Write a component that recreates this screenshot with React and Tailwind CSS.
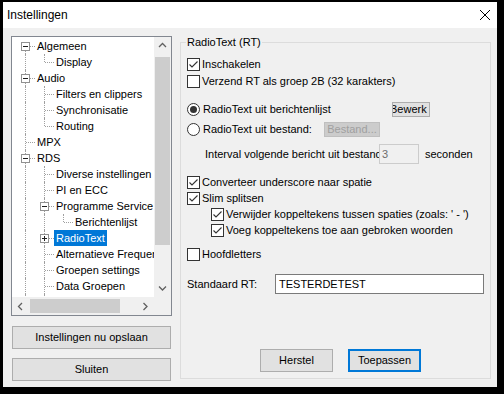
import React from "react";

const FONT = { fontFamily: '"Liberation Sans", Arial, sans-serif' };

const treeRows = [
  { label: "Algemeen", level: 0, exp: "-", own: "bottom", guides: [] },
  { label: "Display", level: 1, own: "top", guides: [true] },
  { label: "Audio", level: 0, exp: "-", own: "full", guides: [] },
  { label: "Filters en clippers", level: 1, own: "full", guides: [true] },
  { label: "Synchronisatie", level: 1, own: "full", guides: [true] },
  { label: "Routing", level: 1, own: "top", guides: [true] },
  { label: "MPX", level: 0, own: "full", guides: [] },
  { label: "RDS", level: 0, exp: "-", own: "full", guides: [] },
  { label: "Diverse instellingen", level: 1, own: "full", guides: [true] },
  { label: "PI en ECC", level: 1, own: "full", guides: [true] },
  { label: "Programme Service", level: 1, exp: "-", own: "full", guides: [true] },
  { label: "Berichtenlijst", level: 2, own: "top", guides: [true, true] },
  { label: "RadioText", level: 1, exp: "+", own: "full", guides: [true], selected: true },
  { label: "Alternatieve Frequenties", level: 1, own: "full", guides: [true] },
  { label: "Groepen settings", level: 1, own: "full", guides: [true] },
  { label: "Data Groepen", level: 1, own: "full", guides: [true] },
  { label: "Afzendinstellingen", level: 1, own: "full", guides: [true] },
  { label: "Overige", level: 1, own: "top", guides: [true] },
];

function TreeRow({ row }) {
  return (
    <div className="flex h-[16px] whitespace-nowrap">
      {row.guides.map((g, i) => (
        <div key={i} className="relative w-[19px] h-full shrink-0">
          {g && <div className="absolute left-[13px] top-0 h-full border-l border-dotted border-[#a0a0a0]" />}
        </div>
      ))}
      <div className="relative w-[23px] h-full shrink-0">
        {row.own === "full" && <div className="absolute left-[13px] top-0 h-full border-l border-dotted border-[#a0a0a0]" />}
        {row.own === "top" && <div className="absolute left-[13px] top-0 h-[8px] border-l border-dotted border-[#a0a0a0]" />}
        {row.own === "bottom" && <div className="absolute left-[13px] top-[8px] h-[8px] border-l border-dotted border-[#a0a0a0]" />}
        <div className="absolute left-[14px] top-[8px] w-[9px] border-t border-dotted border-[#a0a0a0]" />
        {row.exp && (
          <div className="absolute left-[9px] top-[4px] w-[9px] h-[9px] border border-[#919191] bg-white">
            <div className="absolute left-[1px] top-[3px] w-[5px] h-[1px] bg-[#1e1e1e]" />
            {row.exp === "+" && <div className="absolute left-[3px] top-[1px] w-[1px] h-[5px] bg-[#1e1e1e]" />}
          </div>
        )}
      </div>
      <span
        className={
          "px-[2px] leading-[16px] " +
          (row.selected ? "bg-[#0078d7] text-white" : "text-black")
        }
      >
        {row.label}
      </span>
    </div>
  );
}

function Chevron({ dir }) {
  const d = {
    up: "M1 5 L4.5 1.5 L8 5",
    down: "M1 1.5 L4.5 5 L8 1.5",
    left: "M5 1 L1.5 4.5 L5 8",
    right: "M1.5 1 L5 4.5 L1.5 8",
  }[dir];
  const vertical = dir === "up" || dir === "down";
  return (
    <svg width={vertical ? 9 : 7} height={vertical ? 7 : 9} viewBox={vertical ? "0 0 9 7" : "0 0 7 9"}>
      <path d={d} fill="none" stroke="#606060" strokeWidth="1.3" />
    </svg>
  );
}

function Checkbox({ checked }) {
  return (
    <div className="w-[13px] h-[13px] border border-[#333333] bg-white shrink-0 flex items-center justify-center">
      {checked && (
        <svg width="11" height="11" viewBox="0 0 11 11">
          <path d="M1.5 5.5 L4 8 L9.5 2.5" fill="none" stroke="#333333" strokeWidth="1.1" />
        </svg>
      )}
    </div>
  );
}

function Radio({ checked }) {
  return (
    <div className="w-[13px] h-[13px] rounded-full border border-[#333333] bg-white shrink-0 flex items-center justify-center">
      {checked && <div className="w-[7px] h-[7px] rounded-full bg-[#333333]" />}
    </div>
  );
}

function CheckRow({ checked, label, className = "" }) {
  return (
    <div className={"flex items-center h-[16px] " + className}>
      <Checkbox checked={checked} />
      <span className="ml-[2px] whitespace-nowrap">{label}</span>
    </div>
  );
}

export default function App() {
  return (
    <div className="w-[504px] h-[394px] bg-black pt-[2px] pl-[3px] text-[11px] text-black" style={FONT}>
      <div className="w-[494px] h-[385px] bg-[#f0f0f0] flex flex-col">
        <div className="h-[26px] bg-white flex items-center justify-between pl-[4px] pr-[7px] shrink-0">
          <span className="text-[12px]">Instellingen</span>
          <svg width="10" height="10" viewBox="0 0 10 10">
            <path d="M0 0 L10 10 M10 0 L0 10" stroke="#000" strokeWidth="1" />
          </svg>
        </div>

        <div className="flex">
          {/* left column */}
          <div className="pl-[8px] pt-[8px] flex flex-col">
            <div className="w-[161px] h-[280px] border border-[#828790] bg-white flex flex-col">
              <div className="flex h-[260px]">
                <div className="w-[142px] h-full overflow-hidden pt-[1px]">
                  {treeRows.map((r) => (
                    <TreeRow key={r.label} row={r} />
                  ))}
                </div>
                <div className="w-[17px] h-full bg-[#f0f0f0] flex flex-col">
                  <div className="h-[17px] flex items-center justify-center">
                    <Chevron dir="up" />
                  </div>
                  <div className="mt-[3px] mx-[1px] h-[188px] bg-[#cdcdcd]" />
                  <div className="flex-1" />
                  <div className="h-[17px] flex items-center justify-center">
                    <Chevron dir="down" />
                  </div>
                </div>
              </div>
              <div className="flex h-[18px] bg-[#f0f0f0]">
                <div className="w-[142px] h-full flex items-center">
                  <div className="w-[17px] h-full flex items-center justify-center">
                    <Chevron dir="left" />
                  </div>
                  <div className="ml-[1px] w-[90px] h-[14px] bg-[#cdcdcd]" />
                  <div className="flex-1" />
                  <div className="w-[17px] h-full flex items-center justify-center">
                    <Chevron dir="right" />
                  </div>
                </div>
                <div className="w-[17px] h-full bg-[#f0f0f0]" />
              </div>
            </div>
            <button className="mt-[10px] ml-[1px] w-[159px] h-[23px] bg-[#e1e1e1] border border-[#adadad] text-[11px]">
              Instellingen nu opslaan
            </button>
            <button className="mt-[9px] ml-[1px] w-[159px] h-[23px] bg-[#e1e1e1] border border-[#adadad] text-[11px]">
              Sluiten
            </button>
          </div>

          {/* right column */}
          <div className="relative ml-[8px] mt-[14px] w-[311px] h-[337px] border border-[#dcdcdc] flex flex-col pl-[6px] pt-[13px] pb-[6px]">
            <span className="absolute left-[5px] top-[-8px] px-[1px] bg-[#f0f0f0] leading-[14px]">RadioText (RT)</span>

            <CheckRow checked label="Inschakelen" />
            <CheckRow checked={false} label="Verzend RT als groep 2B (32 karakters)" className="mt-[1px]" />

            <div className="flex items-center h-[16px] mt-[12px]">
              <div className="flex items-center w-[205px]">
                <Radio checked />
                <span className="ml-[3px] whitespace-nowrap">RadioText uit berichtenlijst</span>
              </div>
              <button className="w-[38px] h-[15px] bg-[#e1e1e1] border border-[#adadad] flex items-center justify-start overflow-hidden text-[11px] leading-[13px]">
                <span className="whitespace-nowrap -ml-[3px]">Bewerk</span>
              </button>
            </div>
            <div className="flex items-center h-[16px] mt-[4px]">
              <div className="flex items-center w-[137px]">
                <Radio checked={false} />
                <span className="ml-[3px] whitespace-nowrap">RadioText uit bestand:</span>
              </div>
              <button className="w-[56px] h-[15px] bg-[#cccccc] border border-[#bfbfbf] flex items-center justify-center overflow-hidden text-[11px] leading-[13px] text-[#a0a0a0]">
                <span className="whitespace-nowrap">Bestand...</span>
              </button>
            </div>

            <div className="flex items-center h-[20px] mt-[7px] ml-[18px]">
              <div className="w-[174px] overflow-hidden whitespace-nowrap">Interval volgende bericht uit bestand</div>
              <div className="w-[40px] h-[20px] border border-[#cccccc] bg-[#f0f0f0] pl-[2px] leading-[18px] text-[#6d6d6d]">3</div>
              <span className="ml-[6px]">seconden</span>
            </div>

            <CheckRow checked label="Converteer underscore naar spatie" className="mt-[10px]" />
            <CheckRow checked label="Slim splitsen" className="h-[15px]" />
            <CheckRow checked label="Verwijder koppeltekens tussen spaties (zoals: ' - ')" className="ml-[24px]" />
            <CheckRow checked label="Voeg koppeltekens toe aan gebroken woorden" className="ml-[24px]" />
            <CheckRow checked={false} label="Hoofdletters" className="mt-[8px]" />

            <div className="flex items-center h-[20px] mt-[12px]">
              <span className="w-[88px]">Standaard RT:</span>
              <div className="w-[209px] h-[20px] border border-[#7a7a7a] bg-white pl-[3px] leading-[18px]">TESTERDETEST</div>
            </div>

            <div className="flex mt-auto ml-[73px] gap-[15px]">
              <button className="w-[73px] h-[23px] bg-[#e1e1e1] border border-[#adadad] text-[11px]">Herstel</button>
              <button className="w-[73px] h-[23px] bg-[#e1e1e1] border-2 border-[#0078d7] text-[11px]">Toepassen</button>
            </div>
          </div>
        </div>
      </div>
    </div>
  );
}
